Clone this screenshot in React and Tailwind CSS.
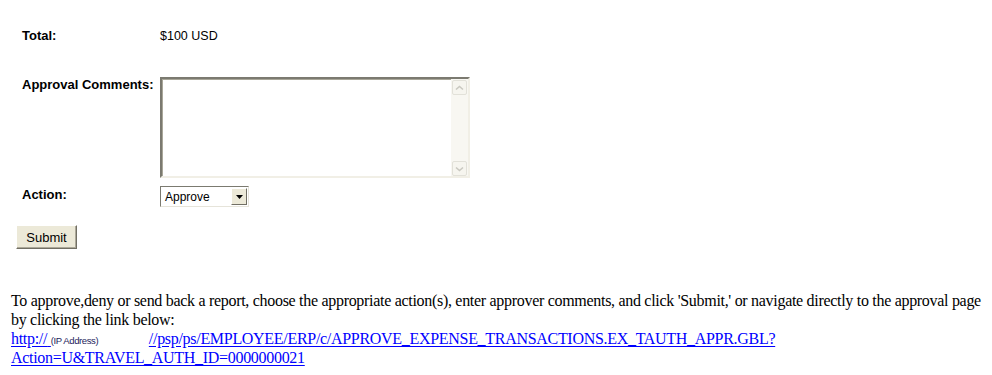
import React from "react";

const ScrollBtn = ({ down }) => (
	<div className="w-[15px] h-[15px] rounded-[2px] border border-[#e2e1d9] bg-[#f6f5ef] flex items-center justify-center">
		<svg width="9" height="6" viewBox="0 0 9 6" fill="none">
			<path
				d={down ? "M1 1.5l3.5 3 3.5-3" : "M1 4.5l3.5-3 3.5 3"}
				stroke="#c9c8c0"
				strokeWidth="1.6"
			/>
		</svg>
	</div>
);

const App = () => {
	return (
		<div className="w-[992px] min-h-[375px] bg-white text-black font-['Liberation_Sans',Arial,sans-serif]">
			<div className="pt-[28px]">
				<div className="flex items-baseline ml-[22px]">
					<div className="w-[138px] text-[13px] leading-[15px] font-bold">Total:</div>
					<div className="text-[12.5px] leading-[15px]">$100 USD</div>
				</div>

				<div className="flex items-start ml-[22px] mt-[33px]">
					<div className="w-[138px] text-[13px] leading-[15px] font-bold">Approval Comments:</div>
					<div className="w-[310px] h-[101px] flex border-2 border-t-[#7b7a70] border-l-[#7b7a70] border-b-[#f1efe6] border-r-[#f1efe6] bg-white">
						<div className="flex-1 border-t border-l border-[#a9a799]"></div>
						<div className="w-[17px] bg-[#f8f7f2] flex flex-col justify-between items-center pt-[1px]">
							<ScrollBtn />
							<ScrollBtn down />
						</div>
					</div>
				</div>

				<div className="flex items-start ml-[22px] mt-[8px]">
					<div className="w-[138px] mt-[1px] text-[13px] leading-[15px] font-bold">Action:</div>
					<div className="w-[89px] h-[21px] flex items-center border border-t-[#7b7a70] border-l-[#7b7a70] border-b-[#e6e4da] border-r-[#e6e4da] bg-white">
						<span className="flex-1 pl-[4px] pt-[2px] text-[12px] leading-[15px]">Approve</span>
						<div className="w-[16px] h-[17px] mr-[1px] flex items-center justify-center bg-[#ece9d8] border border-t-white border-l-white border-b-[#716f64] border-r-[#716f64]">
							<svg width="7" height="4" viewBox="0 0 7 4">
								<path d="M0 0h7L3.5 4z" fill="#000" />
							</svg>
						</div>
					</div>
				</div>

				<div className="flex ml-[16px] mt-[18px]">
					<button className="block w-[61px] h-[24px] bg-[#ece9d8] border border-t-white border-l-white border-b-[#716f64] border-r-[#716f64] shadow-[inset_-1px_-1px_0_#aca899] text-[13px] leading-[15px] text-black">
						Submit
					</button>
				</div>

				<div className="ml-[11px] mr-[4px] mt-[42px] font-['Liberation_Serif','Times_New_Roman',serif] text-[16px] leading-[19px] tracking-[-0.3px]">
					<p>
						To approve,deny or send back a report, choose the appropriate action(s), enter approver comments, and click 'Submit,' or navigate directly to the approval page by clicking the link below:
					</p>
					<a href="#" className="text-[#0000ff] underline underline-offset-[2px]">
						<span className="whitespace-nowrap">
							http://{" "}
							<span className="inline-block w-[98px] text-[9.5px] leading-[10px] text-[#1c1c5c] font-['Liberation_Sans',Arial,sans-serif] tracking-[-0.4px]">
								(IP Address)
							</span>
							//psp/ps/EMPLOYEE/ERP/c/APPROVE_EXPENSE_TRANSACTIONS.EX_TAUTH_APPR.GBL?
						</span>
						<br />
						Action=U&amp;TRAVEL_AUTH_ID=0000000021
					</a>
				</div>
			</div>
		</div>
	);
};

export default App;
